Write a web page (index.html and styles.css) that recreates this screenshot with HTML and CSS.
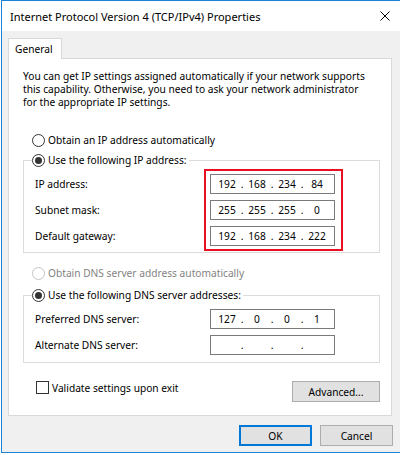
FILE: index.html
```html
<!DOCTYPE html>
<html>
<head>
<meta charset="utf-8">
<link rel="stylesheet" href="styles.css">
</head>
<body>
<div class="window">
  <div class="titlebar">
    <span class="title">Internet Protocol Version 4 (TCP/IPv4) Properties</span>
    <svg class="close" width="10" height="10" viewBox="0 0 10 10"><path d="M0.5 0.5L9.5 9.5M9.5 0.5L0.5 9.5" stroke="#000" stroke-width="1" fill="none"/></svg>
  </div>
  <div class="client">
    <div class="tab">General</div>
    <div class="panel">
      <p class="desc">You can get IP settings assigned automatically if your network supports<br>this capability. Otherwise, you need to ask your network administrator<br>for the appropriate IP settings.</p>
      <div class="radio-row auto-ip"><span class="radio"></span><span>Obtain an IP address automatically</span></div>
      <fieldset class="group group-ip">
        <legend><div class="radio-row"><span class="radio checked"></span><span>Use the following IP address:</span></div></legend>
        <div class="group-body">
          <div class="labels">
            <div class="label">IP address:</div>
            <div class="label">Subnet mask:</div>
            <div class="label">Default gateway:</div>
          </div>
          <div class="highlight">
            <div class="ipbox"><span class="oct">192</span><span class="dot">.</span><span class="oct">168</span><span class="dot">.</span><span class="oct">234</span><span class="dot">.</span><span class="oct">84</span></div>
            <div class="ipbox"><span class="oct">255</span><span class="dot">.</span><span class="oct">255</span><span class="dot">.</span><span class="oct">255</span><span class="dot">.</span><span class="oct">0</span></div>
            <div class="ipbox"><span class="oct">192</span><span class="dot">.</span><span class="oct">168</span><span class="dot">.</span><span class="oct">234</span><span class="dot">.</span><span class="oct">222</span></div>
          </div>
        </div>
      </fieldset>
      <div class="radio-row auto-dns"><span class="radio disabled"></span><span>Obtain DNS server address automatically</span></div>
      <fieldset class="group group-dns">
        <legend><div class="radio-row"><span class="radio checked"></span><span>Use the following DNS server addresses:</span></div></legend>
        <div class="group-body">
          <div class="labels">
            <div class="label">Preferred DNS server:</div>
            <div class="label">Alternate DNS server:</div>
          </div>
          <div class="fields">
            <div class="ipbox"><span class="oct">127</span><span class="dot">.</span><span class="oct">0</span><span class="dot">.</span><span class="oct">0</span><span class="dot">.</span><span class="oct">1</span></div>
            <div class="ipbox"><span class="oct"></span><span class="dot">.</span><span class="oct"></span><span class="dot">.</span><span class="oct"></span><span class="dot">.</span><span class="oct"></span></div>
          </div>
        </div>
      </fieldset>
      <div class="options">
        <div class="check"><span class="box"></span><span>Validate settings upon exit</span></div>
        <button class="btn advanced">Advanced...</button>
      </div>
    </div>
    <div class="buttons">
      <button class="btn ok">OK</button>
      <button class="btn cancel">Cancel</button>
    </div>
  </div>
</div>
</body>
</html>
```

FILE: styles.css
```css
* { box-sizing: border-box; }
html, body { margin: 0; padding: 0; }
body {
  width: 400px;
  height: 455px;
  overflow: hidden;
  background: #fff;
  font-family: "Noto Sans", "Segoe UI", sans-serif;
  font-size: 10.2px;
  color: #000;
}
.window {
  margin-left: 1px;
  width: 400px;
  height: 453px;
  border: 1px solid #1883d7;
  border-right: none;
  background: #f0f0f0;
  display: flex;
  flex-direction: column;
}
.titlebar {
  flex: none;
  height: 30px;
  background: #fff;
  display: flex;
  align-items: center;
  padding: 0 11px 0 8px;
}
.title { flex: 1; font-size: 11px; }
.close { display: block; flex: none; }
.client { flex: 1; padding: 7px 0 0 6px; }
.tab {
  position: relative;
  z-index: 1;
  width: 54px;
  height: 21px;
  margin-bottom: -1px;
  background: #fff;
  border: 1px solid #d9d9d9;
  border-bottom: none;
  padding-left: 6px;
  display: flex;
  align-items: center;
}
.panel {
  width: 384px;
  height: 358px;
  background: #fff;
  border: 1px solid #d9d9d9;
  padding: 0 10px 0 14px;
}
.desc { margin: 11px 0 0; line-height: 13px; }
.radio-row {
  display: flex;
  align-items: center;
  gap: 3px;
  height: 13px;
  line-height: 13px;
}
.radio {
  flex: none;
  width: 13px;
  height: 13px;
  border: 1px solid #333;
  border-radius: 50%;
  background: #fff;
  display: flex;
  align-items: center;
  justify-content: center;
}
.radio.checked::after {
  content: "";
  width: 7px;
  height: 7px;
  border-radius: 50%;
  background: #333;
}
.radio.disabled { border-color: #c4c4c4; }
.auto-ip { margin: 25px 0 0 9px; }
.auto-dns { margin: 14px 0 0 9px; color: #838383; }
.group {
  margin: 7px 0 0;
  padding: 0;
  border: 1px solid #dcdcdc;
  width: 357px;
  min-width: 0;
}
.group-dns { margin-top: 9px; }
.group > legend { margin-left: 8px; padding: 0 2px 0 0; }
.group-body { display: flex; padding: 2px 0 1px 11px; }
.group-dns .group-body { padding: 7px 0 7px 11px; }
.labels {
  width: 169px;
  display: flex;
  flex-direction: column;
  gap: 6px;
  padding-top: 5px;
}
.group-dns .labels { width: 175px; padding-top: 0; }
.label { height: 20px; display: flex; align-items: center; }
.highlight {
  border: 2px solid #e81123;
  padding: 3px 6px 3px 4px;
  display: flex;
  flex-direction: column;
  gap: 6px;
}
.fields { display: flex; flex-direction: column; gap: 6px; }
.ipbox {
  width: 125px;
  height: 20px;
  border: 1px solid #7a7a7a;
  background: #fff;
  display: flex;
  align-items: center;
  padding-left: 4px;
}
.oct { width: 24px; text-align: center; }
.dot { width: 6px; text-align: center; }
.options {
  display: flex;
  justify-content: space-between;
  align-items: flex-start;
  margin-top: 18px;
  padding: 0 1px 0 13px;
}
.check { display: flex; align-items: center; gap: 3px; height: 13px; }
.box { width: 13px; height: 13px; border: 1px solid #333; background: #fff; }
.btn {
  height: 21px;
  padding: 0;
  margin: 0;
  background: #e1e1e1;
  border: 1px solid #adadad;
  font-family: inherit;
  font-size: inherit;
  color: #000;
  display: flex;
  align-items: center;
  justify-content: center;
}
.advanced { width: 88px; }
.buttons { display: flex; gap: 8px; margin-top: 9px; padding-left: 231px; }
.ok { width: 73px; border: 2px solid #0078d7; }
.cancel { width: 73px; }
```
